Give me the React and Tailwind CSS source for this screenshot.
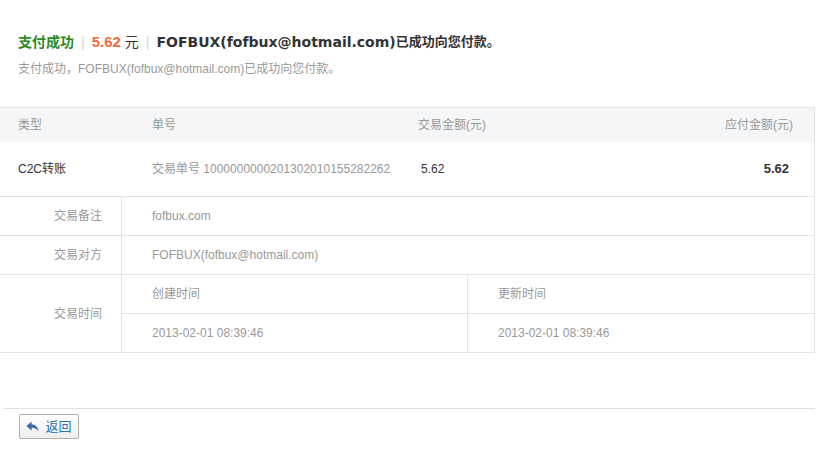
export default function App() {
  const font = { fontFamily: '"Liberation Sans", "Noto Sans CJK SC", sans-serif' }

  return (
    <div style={font} className="w-[832px] h-[466px] bg-white text-[12px] text-[#333] overflow-hidden">
      <div className="w-[815px]">
        {/* 顶部结果 */}
        <div className="pt-[33px] pl-[18px]">
          <div className="h-[18px] leading-[18px] text-[14px] flex items-center">
            <span className="font-bold text-[#2d8a1e]">支付成功</span>
            <span className="mx-[7px] text-[#d5d5d5]">|</span>
            <span className="font-bold text-[#ef6c3e] text-[15px]">5.62</span>
            <span className="ml-[4px] text-[#333]">元</span>
            <span className="mx-[7px] text-[#d5d5d5]">|</span>
            <span className="font-bold text-[#333] font-['DejaVu_Sans','Noto_Sans_CJK_SC',sans-serif] text-[14px]">FOFBUX(fofbux@hotmail.com)</span>
            <span className="font-bold text-[#333] text-[13px]">已成功向您付款。</span>
          </div>
          <p className="mt-[10px] h-[16px] leading-[16px] text-[#999]">支付成功，FOFBUX(fofbux@hotmail.com)已成功向您付款。</p>
        </div>

        {/* 交易表格 */}
        <div className="mt-[30px] border-t border-r border-[#e4e4e4]">
          <div className="grid grid-cols-[134px_266px_1fr_1fr] h-[34px] items-center bg-[#f5f6f7] text-[#999]">
            <div className="pl-[18px]">类型</div>
            <div className="pl-[18px]">单号</div>
            <div className="pl-[18px]">交易金额(元)</div>
            <div className="pr-[21px] text-right">应付金额(元)</div>
          </div>
          <div className="grid grid-cols-[134px_266px_1fr_1fr] h-[55px] items-center border-b border-[#e4e4e4]">
            <div className="pl-[18px] text-[#333]">C2C转账</div>
            <div className="pl-[18px] text-[#999]">交易单号 1000000000201302010155282262</div>
            <div className="pl-[21px] text-[#333]">5.62</div>
            <div className="pr-[25px] text-right font-bold text-[13px] text-[#333]">5.62</div>
          </div>

          <div className="flex h-[39px] border-b border-[#e4e4e4]">
            <div className="w-[122px] shrink-0 border-r border-[#e4e4e4] pr-[19px] flex items-center justify-end text-[#999]">交易备注</div>
            <div className="flex-1 pl-[30px] flex items-center text-[#999]">fofbux.com</div>
          </div>
          <div className="flex h-[39px] border-b border-[#e4e4e4]">
            <div className="w-[122px] shrink-0 border-r border-[#e4e4e4] pr-[19px] flex items-center justify-end text-[#999]">交易对方</div>
            <div className="flex-1 pl-[30px] flex items-center text-[#999]">FOFBUX(fofbux@hotmail.com)</div>
          </div>
          <div className="flex h-[78px] border-b border-[#e4e4e4]">
            <div className="w-[122px] shrink-0 border-r border-[#e4e4e4] pr-[19px] flex items-center justify-end text-[#999]">交易时间</div>
            <div className="flex-1 grid grid-cols-[346px_1fr] grid-rows-2 text-[#999]">
              <div className="pl-[30px] flex items-center border-r border-b border-[#e4e4e4]">创建时间</div>
              <div className="pl-[30px] flex items-center border-b border-[#e4e4e4]">更新时间</div>
              <div className="pl-[30px] flex items-center border-r border-[#e4e4e4]">2013-02-01 08:39:46</div>
              <div className="pl-[30px] flex items-center">2013-02-01 08:39:46</div>
            </div>
          </div>
        </div>

        {/* 底部按钮 */}
        <div className="mt-[55px] ml-[4px] border-t border-[#e0e0e0] pt-[5px] pl-[15px]">
          <button className="w-[60px] h-[25px] flex items-center justify-center gap-[6px] border border-[#b0b0b0] rounded-[2px] bg-gradient-to-b from-white to-[#eeeeee] text-[13px] text-[#2a74ad]">
            <svg width="13" height="11" viewBox="0 0 14 12">
              <path d="M6 0.5 L0.5 5.5 L6 10.5 V7.5 C9.3 7.4 11.8 8.6 13.5 11.5 C13.2 6.8 10.4 3.8 6 3.5 Z" fill="#3f6aa6" />
            </svg>
            返回
          </button>
        </div>
      </div>
    </div>
  )
}
